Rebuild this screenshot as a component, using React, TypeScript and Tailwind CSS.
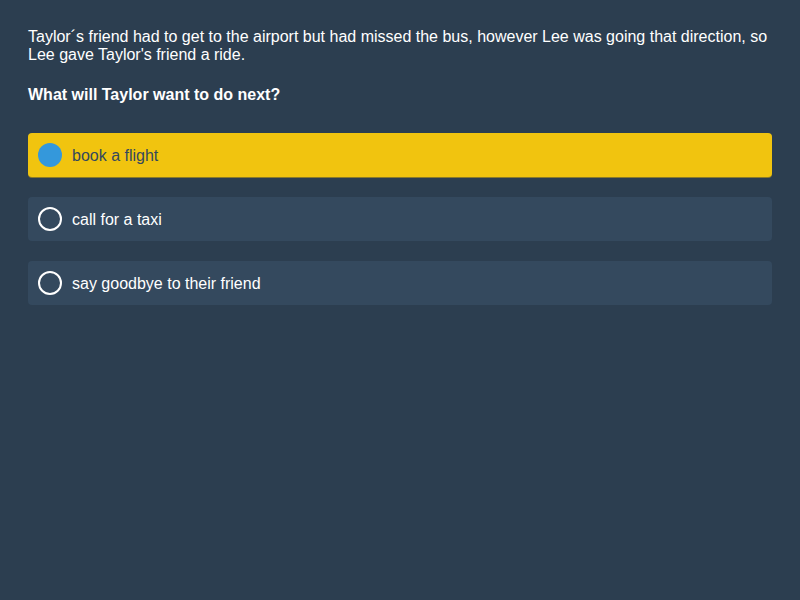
export default function App() {
  const options = ['book a flight', 'call for a taxi', 'say goodbye to their friend'];
  const selected = 0;

  return (
    <div className="min-h-[600px] w-full bg-[#2c3e50] px-[28px] pt-[28px] font-['Liberation_Sans',Arial,sans-serif] text-white">
      <p className="text-[16px] leading-[18px]">
        Taylor´s friend had to get to the airport but had missed the bus, however Lee was going that direction, so Lee gave
        Taylor's friend a ride.
      </p>
      <p className="mt-[22px] text-[16px] font-bold leading-[18px]">What will Taylor want to do next?</p>

      <div className="mt-[29px] flex flex-col gap-[20px]">
        {options.map((opt, i) => {
          const active = i === selected;
          return (
            <div
              key={opt}
              className={
                active
                  ? 'flex h-[44px] items-center gap-[10px] rounded-[4px] bg-[#f1c40f] px-[10px] text-[#34495e] shadow-[0_1px_0_#8a7a2a]'
                  : 'flex h-[44px] items-center gap-[10px] rounded-[4px] bg-[#34495e] px-[10px] text-white'
              }
            >
              {active ? (
                <span className="h-[24px] w-[24px] rounded-full bg-[#3498db]" />
              ) : (
                <span className="h-[24px] w-[24px] rounded-full border-2 border-white" />
              )}
              <span className="pt-[2px] text-[16px] leading-[18px]">{opt}</span>
            </div>
          );
        })}
      </div>
    </div>
  );
}
